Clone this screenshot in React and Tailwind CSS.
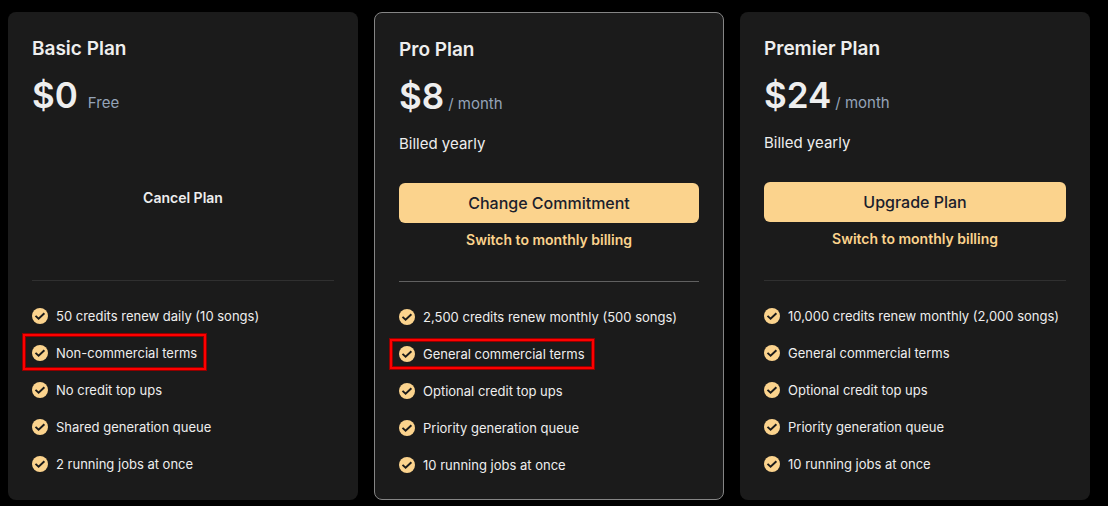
/**
 * PlanPicker — Three subscription plan cards with price, action and feature list
 */

import React from 'react';

const PLANS = [
    {
        id: 'basic',
        name: 'Basic Plan',
        price: '$0',
        period: 'Free',
        features: [
            { text: '50 credits renew daily (10 songs)' },
            { text: 'Non-commercial terms', frame: '-top-2 -bottom-1.5' },
            { text: 'No credit top ups' },
            { text: 'Shared generation queue' },
            { text: '2 running jobs at once' },
        ],
    },
    {
        id: 'pro',
        name: 'Pro Plan',
        price: '$8',
        period: '/ month',
        billing: 'Billed yearly',
        action: 'Change Commitment',
        current: true,
        features: [
            { text: '2,500 credits renew monthly (500 songs)' },
            { text: 'General commercial terms', frame: '-top-1 -bottom-1' },
            { text: 'Optional credit top ups' },
            { text: 'Priority generation queue' },
            { text: '10 running jobs at once' },
        ],
    },
    {
        id: 'premier',
        name: 'Premier Plan',
        price: '$24',
        period: '/ month',
        billing: 'Billed yearly',
        action: 'Upgrade Plan',
        features: [
            { text: '10,000 credits renew monthly (2,000 songs)' },
            { text: 'General commercial terms' },
            { text: 'Optional credit top ups' },
            { text: 'Priority generation queue' },
            { text: '10 running jobs at once' },
        ],
    },
];

const CheckIcon = () => (
    <svg viewBox="0 0 16 16" className="w-4 h-4 flex-shrink-0" aria-hidden="true">
        <circle cx="8" cy="8" r="8" fill="#fbd38d" />
        <path d="M3.5 7.9 6.6 10.8 12.4 5.2" fill="none" stroke="#1b1b1b" strokeWidth="1.9" />
    </svg>
);

const Feature = ({ text, frame }) => (
    <li className="flex">
        <div className="relative flex items-center gap-2 text-[13px] leading-[22px] whitespace-nowrap">
            <CheckIcon />
            {text}
            {/* Callout frame */}
            {frame && (
                <span className={`absolute -inset-x-[9px] ${frame} border-2 border-[#ff0000] ring-1 ring-[#900000] inset-ring-1 inset-ring-[#900000] pointer-events-none`} />
            )}
        </div>
    </li>
);

const PlanCard = ({ plan }) => {
    const { name, price, period, billing, action, current, features } = plan;

    return (
        <section className={`rounded-lg bg-[#1b1b1b] px-6 pt-6 pb-[23px] ${current ? 'border border-[#858585]' : ''}`}>
            <h2 className="text-[19px] leading-[26px] font-semibold">{name}</h2>
            <p className="mt-3.5 h-[38px] flex items-baseline gap-1">
                <span className="text-[35px] leading-[38px] font-semibold">{price}</span>
                <span className={`text-[15px] leading-6 text-[#94a3b8] ${action ? '' : 'pl-1.5'}`}>{period}</span>
            </p>
            <p className="mt-[17px] h-6 text-[15px] leading-6">{billing}</p>

            <div className="mt-[27px] h-[68px] flex flex-col items-center gap-[7px]">
                {action ? (
                    <>
                        <button type="button" className="w-full h-10 rounded-md bg-[#fbd38d] text-[#1a202c] text-base font-medium cursor-pointer">
                            {action}
                        </button>
                        <button type="button" className="text-sm leading-5 font-semibold text-[#fbd38d] cursor-pointer">
                            Switch to monthly billing
                        </button>
                    </>
                ) : (
                    <button type="button" className="h-8 text-sm font-semibold cursor-pointer">Cancel Plan</button>
                )}
            </div>

            <hr className={`mt-[30px] ${current ? 'border-[#606060]' : 'border-[#303030]'}`} />

            <ul className="mt-6 flex flex-col gap-[15px]">
                {features.map((f) => (
                    <Feature key={f.text} text={f.text} frame={f.frame} />
                ))}
            </ul>
        </section>
    );
};

const App = () => (
    <main className="min-h-screen bg-black pt-3 pl-2 pr-[18px] pb-1.5 text-[#eeeeee] font-['Inter',sans-serif]">
        <div className="grid grid-cols-3 gap-4">
            {PLANS.map((plan) => (
                <PlanCard key={plan.id} plan={plan} />
            ))}
        </div>
    </main>
);

export default App;
